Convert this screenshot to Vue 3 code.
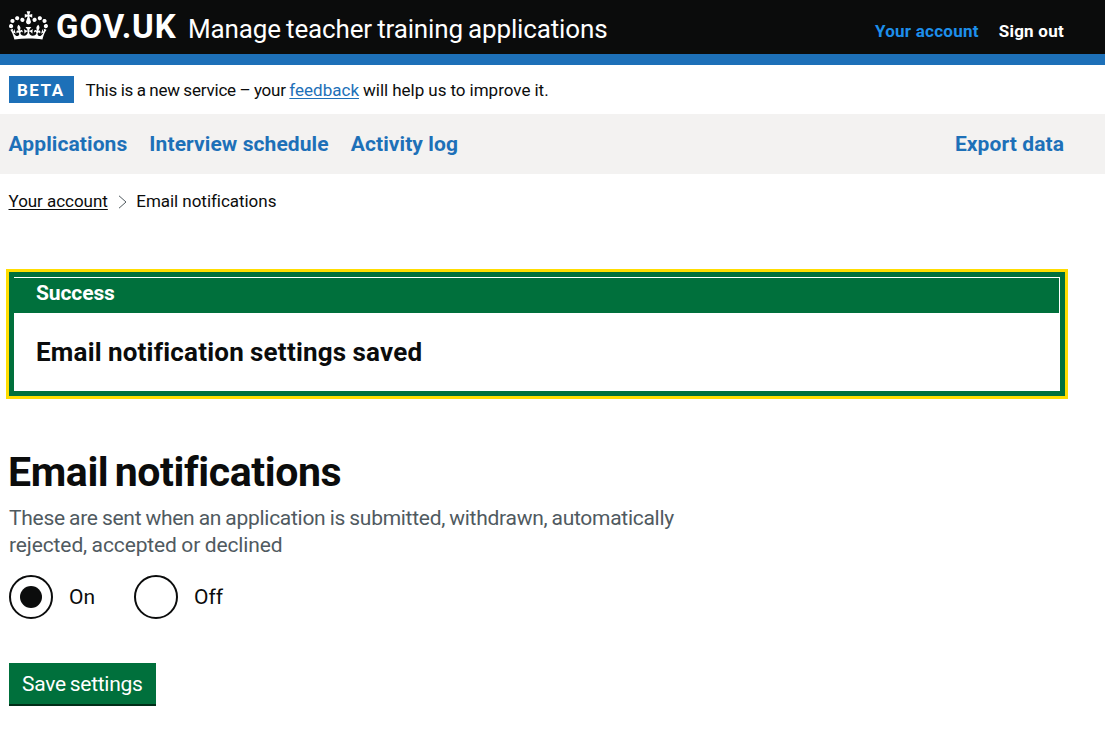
<script setup>
import { ref } from 'vue'

const choice = ref('on')
const options = [
  { value: 'on', label: 'On' },
  { value: 'off', label: 'Off' },
]
</script>

<template>
  <div class="page">
    <header class="header">
      <a class="logo">
        <svg class="crown" viewBox="0 0 132 97" aria-hidden="true">
          <path fill="currentColor" fill-rule="evenodd" d="M25 30.2c3.5 1.5 7.7-.2 9.1-3.7 1.5-3.6-.2-7.8-3.9-9.2-3.6-1.4-7.6.3-9.1 3.9-1.4 3.5.3 7.5 3.9 9zM9 39.5c3.6 1.5 7.8-.2 9.2-3.7 1.5-3.6-.2-7.8-3.9-9.1-3.6-1.5-7.6.2-9.1 3.8-1.4 3.5.3 7.5 3.8 9zM4.4 57.2c3.5 1.5 7.7-.2 9.1-3.8 1.5-3.6-.2-7.7-3.9-9.1-3.5-1.5-7.6.3-9.1 3.8-1.4 3.5.3 7.6 3.9 9.1zm38.3-21.4c3.5 1.5 7.7-.2 9.1-3.8 1.5-3.6-.2-7.7-3.9-9.1-3.6-1.5-7.6.3-9.1 3.8-1.3 3.6.4 7.7 3.9 9.1zm64.4-5.6c-3.6 1.5-7.8-.2-9.1-3.7-1.5-3.6.2-7.8 3.8-9.2 3.6-1.4 7.7.3 9.2 3.9 1.3 3.5-.4 7.5-3.9 9zm15.9 9.3c-3.6 1.5-7.7-.2-9.1-3.7-1.5-3.6.2-7.8 3.7-9.1 3.6-1.5 7.7.2 9.2 3.8 1.5 3.5-.3 7.5-3.8 9zm4.7 17.7c-3.6 1.5-7.8-.2-9.2-3.8-1.5-3.6.2-7.7 3.9-9.1 3.6-1.5 7.7.3 9.2 3.8 1.3 3.5-.4 7.6-3.9 9.1zM89.3 35.8c-3.6 1.5-7.8-.2-9.2-3.8-1.4-3.6.2-7.7 3.9-9.1 3.6-1.5 7.7.3 9.2 3.8 1.4 3.6-.3 7.7-3.9 9.1zM69.7 17.7l8.9 4.7V9.3l-8.9 2.8c-.2-.3-.5-.6-.9-.9L72.4 0H59.6l3.5 11.2c-.3.3-.6.5-.9.9l-8.8-2.8v13.1l8.8-4.7c.3.3.6.7.9.9l-5 15.4v.1c-.2.8-.4 1.6-.4 2.4 0 4.1 3.1 7.5 7 8.1h.2c.3 0 .7.1 1 .1.4 0 .7 0 1-.1h.2c4-.6 7.1-4.1 7.1-8.1 0-.8-.1-1.7-.4-2.4V34l-5.1-15.4c.4-.2.7-.6 1-.9zM66 92.8c16.9 0 32.8 1.1 47.1 3.2 4-16.9 8.9-26.7 14-33.5l-9.6-3.4c1 4.9 1.1 7.2 0 10.2-1.5-1.4-3-4.3-4.2-8.7L108.6 76c2.8-2 5-3.2 7.5-3.3-4.4 9.4-10 11.9-13.6 11.2-4.3-.8-6.3-4.6-5.6-7.9 1-4.7 5.7-5.9 8-.5 4.3-8.7-3-11.4-7.6-8.8 7.1-7.2 7.9-13.5 2.1-21.1-8 6.1-8.1 12.3-4.5 20.8-4.7-5.4-12.1-2.5-9.5 6.2 3.4-5.2 7.9-2 7.2 3.1-.6 4.3-6.4 7.8-13.5 7.2-10.3-.9-10.9-8-11.2-13.8 2.5-.5 7.1 1.8 11 7.3L80.2 60c-4.1 4.4-8 5.3-12.3 5.4 1.4-4.4 8-11.6 8-11.6H55.5s6.4 7.2 7.9 11.6c-4.2-.1-8-1-12.3-5.4l1.4 16.4c3.9-5.5 8.5-7.7 10.9-7.3-.3 5.8-.9 12.8-11.1 13.8-7.2.6-12.9-2.9-13.5-7.2-.7-5 3.8-8.3 7.1-3.1 2.7-8.7-4.6-11.6-9.4-6.2 3.7-8.5 3.6-14.7-4.6-20.8-5.8 7.6-5 13.9 2.2 21.1-4.7-2.6-11.9.1-7.7 8.8 2.3-5.5 7.1-4.2 8.1.5.7 3.3-1.3 7.1-5.7 7.9-3.5.7-9-1.8-13.5-11.2 2.5.1 4.7 1.3 7.5 3.3l-4.7-15.4c-1.2 4.4-2.7 7.2-4.3 8.7-1.1-3-.9-5.3 0-10.2l-9.5 3.4c5 6.9 9.9 16.7 14 33.5 14.8-2.1 30.8-3.2 47.7-3.2z" />
        </svg>
        <span class="govuk">GOV.UK</span>
      </a>
      <span class="service">Manage teacher training applications</span>
      <nav class="account">
        <a class="account-link active">Your account</a>
        <a class="account-link signout">Sign out</a>
      </nav>
    </header>

    <div class="phase">
      <strong class="tag">BETA</strong>
      <span class="phase-text"><span class="phase-lead">This is a new service – your </span><a class="feedback">feedback</a> will help us to improve it.</span>
    </div>

    <nav class="primary">
      <a class="nav-a">Applications</a>
      <a class="nav-b">Interview schedule</a>
      <a class="nav-c">Activity log</a>
      <a class="nav-d">Export data</a>
    </nav>

    <nav class="crumbs">
      <a class="crumb-link">Your account</a>
      <svg class="chevron" viewBox="0 0 9 14" aria-hidden="true"><path d="M1 .8l7 6.2-7 6.2" fill="none" stroke="#505a5f" stroke-width="1" /></svg>
      <span class="crumb-current">Email notifications</span>
    </nav>

    <section class="banner">
      <div class="banner-head"><h2>Success</h2></div>
      <div class="banner-body"><h3>Email notification settings saved</h3></div>
    </section>

    <main>
      <h1>Email notifications</h1>
      <p class="hint"><span class="hint-a">These are sent when an application is submitted, withdrawn, automatically</span><br><span class="hint-b">rejected, accepted or declined</span></p>
      <div class="radios">
        <label v-for="o in options" :key="o.value" class="radio" @click="choice = o.value">
          <span class="ring"><span v-if="choice === o.value" class="dot"></span></span>
          <span class="radio-text">{{ o.label }}</span>
        </label>
      </div>
      <button class="save"><span>Save settings</span></button>
    </main>
  </div>
</template>

<style>
html, body { background: #fff; }
</style>

<style scoped>
.page {
  box-sizing: border-box;
  height: 744px;
  overflow: hidden;
  background: #fff;
  color: #0b0c0c;
  font-family: Roboto, "Open Sans", sans-serif;
  white-space: nowrap;
}
h1, h2, h3, p { margin: 0; }
.header {
  box-sizing: border-box;
  height: 65px;
  padding: 0 41px 0 9px;
  display: flex;
  align-items: flex-start;
  background: #0b0c0c;
  border-bottom: 11px solid #1d70b8;
  color: #fff;
}
.logo { display: flex; width: 179px; }
.crown { width: 39px; height: 29px; margin-top: 11px; }
.govuk { margin: 7px 0 0 8px; font-size: 33px; line-height: 40px; font-weight: 700; letter-spacing: 0.9px; }
.service { margin-top: 13px; font-size: 26px; line-height: 32px; letter-spacing: -0.15px; word-spacing: -1.1px; }
.account { margin: 21px 0 0 auto; display: flex; gap: 20px; font-size: 17px; line-height: 20px; font-weight: 700; letter-spacing: 0.25px; }
.active { color: #1d8feb; }
.phase { height: 49px; padding-left: 9px; display: flex; align-items: center; }
.tag {
  box-sizing: border-box;
  width: 65px; height: 27px; margin-top: -1px; padding-left: 8px;
  background: #1d70b8; color: #fff;
  font-size: 17px; line-height: 28px; letter-spacing: 1.5px;
}
.phase-text { margin: 1px 0 0 11.5px; font-size: 17px; line-height: 20px; word-spacing: -0.2px; }
.phase-lead { letter-spacing: -0.2px; word-spacing: -0.5px; }
.feedback { color: #1d70b8; text-decoration: underline; text-underline-offset: 2px; text-decoration-thickness: 1px; }
.primary {
  height: 60px; padding: 0 41px 0 8.5px;
  display: flex; align-items: center; gap: 22px;
  background: #f3f2f1; color: #1d70b8;
  font-size: 21px; font-weight: 700; letter-spacing: 0.09px;
}
.nav-d { margin-left: auto; }
.crumbs { height: 54px; padding-left: 8.5px; display: flex; align-items: center; font-size: 17px; line-height: 20px; letter-spacing: -0.04px; }
.crumb-link { text-decoration: underline; text-underline-offset: 2px; text-decoration-thickness: 1px; }
.chevron { width: 9px; height: 14px; margin: 1px 9.5px 0 10px; }
.banner {
  box-sizing: border-box;
  width: 1056px; height: 124px; margin: 44px 0 0 9px;
  border: 5px solid #00703c; outline: 3px solid #ffdd00;
}
.banner-head {
  box-sizing: border-box;
  height: 36px; padding-left: 22px;
  background: #00703c; color: #fff;
  border-top: 1px solid #fff; border-right: 1px solid #fff;
}
h2 { font-size: 21px; line-height: 31px; letter-spacing: -0.1px; }
.banner-body { padding: 23px 0 0 22px; }
h3 { font-size: 26px; line-height: 32px; letter-spacing: 0.22px; word-spacing: -0.7px; }
main { padding-left: 9px; }
h1 { margin: 51px 0 0 -1px; font-size: 41px; line-height: 50px; letter-spacing: -0.38px; word-spacing: -3.5px; }
.hint { margin-top: 8px; color: #505a5f; font-size: 21px; line-height: 27px; }
.hint-a { letter-spacing: -0.28px; word-spacing: -0.7px; }
.hint-b { letter-spacing: -0.12px; word-spacing: -0.6px; }
.radios { margin-top: 16px; display: flex; }
.radio { display: flex; align-items: center; width: 125px; height: 44px; font-size: 21px; }
.ring {
  box-sizing: border-box; width: 44px; height: 44px;
  border: 2px solid #0b0c0c; border-radius: 50%;
  display: grid; place-items: center;
}
.dot { width: 22px; height: 22px; border-radius: 50%; background: #0b0c0c; }
.radio-text { margin-left: 16px; }
.save {
  display: block; box-sizing: border-box;
  width: 147px; height: 41px; margin: 44px 0 0; padding: 1px 0 0 13px;
  border: 0; box-shadow: 0 2px 0 #002d18;
  background: #00703c; color: #fff;
  font: 400 21px/40px Roboto, sans-serif; text-align: left;
  letter-spacing: -0.3px; word-spacing: -0.8px;
}
</style>
